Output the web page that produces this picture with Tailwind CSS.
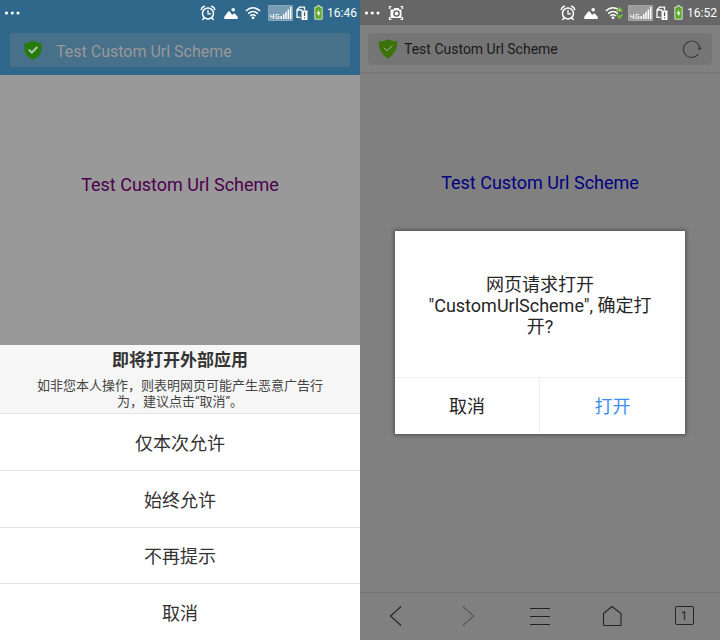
<!DOCTYPE html>
<html lang="zh-CN">
<head>
<meta charset="utf-8">
<meta name="viewport" content="width=device-width, initial-scale=1">
<title>Test Custom Url Scheme</title>
<script src="https://cdn.jsdelivr.net/npm/@tailwindcss/browser@4"></script>
</head>
<body class="font-[Roboto,'Noto_Sans_CJK_SC',sans-serif]">
<svg class="hidden" aria-hidden="true">
  <symbol id="alarm" viewBox="0 0 16 16"><g fill="none" stroke="#fff" stroke-linecap="round"><circle cx="8" cy="8.5" r="5.5" stroke-width="1.5"/><path d="M8 5.500v3.300h2.600" stroke-width="1.300"/><path d="M1.200 4.400Q2 2 4.400 1.300M14.800 4.400Q14 2 11.600 1.300M3.800 13.200l-1 1.200M12.200 13.200l1 1.200" stroke-width="1.500"/></g></symbol>
  <symbol id="picture" viewBox="0 0 14 14"><path fill="#fff" d="M.3 13V10.800L3.900 6Q5 4.700 6.100 6L8.200 9l1.200-1.300q.8-.6 1.500.1l2.800 3V13z"/><circle cx="9.200" cy="3.700" r="1.800" fill="#fff"/></symbol>
  <symbol id="wifi" viewBox="0 0 16 14"><g fill="none" stroke="#fff" stroke-width="1.500"><path d="M.8 5Q8-1.400 15.200 5M3.200 7.600Q8 3.300 12.800 7.600M5.300 10Q8 7.600 10.700 10"/></g><circle cx="8" cy="11.800" r="1.400" fill="#fff"/></symbol>
  <symbol id="signal" viewBox="0 0 25 16"><path fill="#fff" fill-opacity=".35" stroke="#fff" stroke-opacity=".3" d="M.5.5h24v15H.5z"/><g fill="none" stroke="#fff" stroke-opacity=".85"><path d="M2.500 9.500v2.500h4M5.500 9v5M11 9.500H8v4h3v-2H9.500"/></g><path fill="#fff" d="M12.500 11h1.500v3h-1.500zM15 9h1.500v5H15zM17.300 7h1.500v7h-1.500zM19.600 4.500h1.500V14h-1.500zM21.900 2h1.500v12h-1.500z"/></symbol>
  <symbol id="sim" viewBox="0 0 12 14"><path d="M4.500 11.400H1V3.800L3.500 1.200H8.500V4" fill="none" stroke="#fff" stroke-width="1.300"/><path fill="#fff" d="M1 3.200h5v1.600H1zM5.500 4.500H11.500V14h-6z"/><path fill="#555" d="M7.900 6.300h1.300v3.700H7.900zM7.900 11.200h1.300v1.300H7.900z"/></symbol>
  <symbol id="battery" viewBox="0 0 9 15"><path fill="#5aa828" stroke="#d7e2d0" d="M.8 2.200H3V.8h3v1.400h2.200v12H.8z"/><path fill="#fff" d="M5.200 4.500L2.500 8.700h1.800L3.900 12 6.600 7.500H4.900z"/></symbol>
</svg>

<div class="grid min-h-screen grid-cols-2">

  <section class="flex flex-col bg-[#999]">
    <header class="bg-[#2f688a] pb-2">
      <div class="flex h-[25px] items-center pr-[3px] pl-[5px] text-[12px] text-white">
        <svg class="h-4 w-4" viewBox="0 0 16 16" fill="#fff"><circle cx="1.500" cy="8" r="1.600"/><circle cx="7.300" cy="8" r="1.600"/><circle cx="13" cy="8" r="1.600"/></svg>
        <svg class="mr-2 ml-auto h-4 w-4"><use href="#alarm"/></svg>
        <svg class="mr-[7px] h-3.5 w-3.5"><use href="#picture"/></svg>
        <svg class="mr-[7px] h-3.5 w-4"><use href="#wifi"/></svg>
        <svg class="mr-[3px] h-4 w-[25px]"><use href="#signal"/></svg>
        <svg class="mr-1.5 h-3.5 w-3"><use href="#sim"/></svg>
        <svg class="mr-1 h-[15px] w-[9px]"><use href="#battery"/></svg>
        <time>16:46</time>
      </div>
      <div class="mx-2.5 mt-2 flex h-[34px] items-center gap-3.5 bg-[#47708b] pl-3.5">
        <svg class="h-5 w-[18px] shrink-0" viewBox="0 0 18 20"><path fill="#257a08" d="M9 .5Q12.500 3 17.500 3.200V9q0 7.500-8.500 10.500Q.5 16.500.5 9V3.200Q5.500 3 9 .5z"/><path d="M4.800 9.600l3 3 5.500-5.600" fill="none" stroke="#b8c4b4" stroke-width="2"/></svg>
        <input aria-label="网址" class="h-full min-w-0 flex-1 bg-transparent pt-0.5 text-[16px] text-[#999] outline-none" value="Test Custom Url Scheme">
      </div>
    </header>
    <main class="flex-1 pt-24 text-center">
      <a href="#" class="text-[18px] leading-7 text-[#4d004d]">Test Custom Url Scheme</a>
    </main>
    <div role="dialog" aria-labelledby="sheet-title" class="bg-white text-[#333]">
      <div class="border-b border-[#e4e4e4] bg-[#f6f6f6] px-6 py-[3px] text-center">
        <h2 id="sheet-title" class="text-[17px] leading-6 font-bold">即将打开外部应用</h2>
        <p class="mt-1.5 text-[13px] leading-4 text-[#444]">如非您本人操作，则表明网页可能产生恶意广告行<br>为，建议点击“取消”。</p>
      </div>
      <div class="grid divide-y divide-[#e4e4e4] text-[18px]">
        <button class="h-[57px] pt-0.5">仅本次允许</button>
        <button class="h-[57px] pt-0.5">始终允许</button>
        <button class="h-[56px] pt-0.5">不再提示</button>
        <button class="h-[56px] pt-0.5">取消</button>
      </div>
    </div>
  </section>

  <section class="relative flex flex-col bg-[#808080]">
    <header class="border-b border-[#777] pb-[7px]">
      <div class="flex h-[25px] items-center bg-[#666] pr-[3px] pl-[5px] text-[12px] text-white">
        <svg class="h-4 w-4" viewBox="0 0 16 16" fill="#fff"><circle cx="1.500" cy="8" r="1.600"/><circle cx="7.300" cy="8" r="1.600"/><circle cx="13" cy="8" r="1.600"/></svg>
        <svg class="ml-[7px] h-4 w-4" viewBox="0 0 16 16"><path d="M1.500 4V1.700h2M12.500 1.700h2V4M1.500 12v2.300h2M12.500 14.300h2V12" fill="none" stroke="#fff" stroke-width="1.200"/><path fill="#fff" d="M2.500 4.500h3L6.500 3h4l1 1.500h2V13h-11z"/><circle cx="8.500" cy="8.500" r="2.600" fill="none" stroke="#555" stroke-width="1.300"/></svg>
        <svg class="mr-2 ml-auto h-4 w-4"><use href="#alarm"/></svg>
        <svg class="mr-[7px] h-3.5 w-3.5"><use href="#picture"/></svg>
        <svg class="mr-[5px] h-3.5 w-[18px]" viewBox="0 0 18 14"><use href="#wifi" width="16" height="14"/><path d="M11.800 5.500l2.700-3.200 2.700 3.200M11.800 8.500l2.700 3.200 2.700-3.200" fill="none" stroke="#70c030" stroke-width="1.900"/></svg>
        <svg class="mr-[3px] h-4 w-[25px]"><use href="#signal"/></svg>
        <svg class="mr-1.5 h-3.5 w-3"><use href="#sim"/></svg>
        <svg class="mr-1 h-[15px] w-[9px]"><use href="#battery"/></svg>
        <time>16:52</time>
      </div>
      <div class="mx-2 mt-2 flex h-8 items-center gap-1.5 rounded-sm bg-[#757575] pr-2.5 pl-2.5">
        <svg class="h-5 w-5 shrink-0" viewBox="0 0 20 20"><path fill="#3c720a" d="M10 .2Q13 2 19.300 2.500 20 13 10 19.800 0 13 .7 2.500 7 2 10 .2z"/><path d="M5.800 8.800l3 3L14.500 6.500" fill="none" stroke="#a9b89a" stroke-width="1"/></svg>
        <input aria-label="网址" class="min-w-0 flex-1 bg-transparent text-[14px] text-[#1a1a1a] outline-none" value="Test Custom Url Scheme">
        <button aria-label="刷新"><svg class="h-5 w-5" viewBox="0 0 20 20"><path d="M16.200 15.200A8.200 8.200 0 1 1 17.800 9.500" fill="none" stroke="#3c3c3c" stroke-width="1.100"/><path fill="#3c3c3c" d="M15.500 8.800h4.300l-2.100 2.700z"/></svg></button>
      </div>
    </header>
    <main class="flex-1 pt-24 text-center">
      <a href="#" class="text-[18px] leading-7 text-[#000080]">Test Custom Url Scheme</a>
    </main>
    <nav class="grid h-12 grid-cols-5 items-center justify-items-center border-t border-[#737373] pb-0.5 text-[#262626]">
      <button aria-label="后退"><svg class="h-6 w-6" viewBox="0 0 24 24" fill="none" stroke="currentColor" stroke-width="1.100"><path d="M17 2.500L6.500 12 17 21.500"/></svg></button>
      <button aria-label="前进"><svg class="h-6 w-6 text-[#585858]" viewBox="0 0 24 24" fill="none" stroke="currentColor" stroke-width="1.100"><path d="M7 2.500L17.500 12 7 21.500"/></svg></button>
      <button aria-label="菜单"><svg class="h-6 w-6" viewBox="0 0 24 24" fill="none" stroke="currentColor" stroke-width="1.100"><path d="M2 4.500h20M2 12.500h20M2 20.500h20"/></svg></button>
      <button aria-label="主页"><svg class="h-6 w-6" viewBox="0 0 24 24" fill="none" stroke="currentColor" stroke-width="1.100" stroke-linejoin="round"><path d="M3.500 20.500V9.500L12 2.500l9 7v11.200q0 .8-.8.8H4.300q-.8 0-.8-.8z"/></svg></button>
      <button aria-label="标签页 1" class="h-[19px] w-[19px] rounded-xs border border-current text-[12px] leading-4">1</button>
    </nav>
    <div class="absolute inset-0 flex items-center px-[35px] pt-[25px]">
      <div role="dialog" aria-labelledby="ask" class="w-full bg-white text-[18px] text-[#262626] shadow-[0_0_4px_1px_rgba(0,0,0,0.4)]">
        <p id="ask" class="px-7 pt-[43px] pb-10 text-center leading-[21px]">网页请求打开<br>"CustomUrlScheme", 确定打<br>开?</p>
        <div class="grid grid-cols-2 divide-x divide-[#eee] border-t border-[#eee]">
          <button class="h-14">取消</button>
          <button class="h-14 text-[#3a8ff0]">打开</button>
        </div>
      </div>
    </div>
  </section>
</div>
</body>
</html>
